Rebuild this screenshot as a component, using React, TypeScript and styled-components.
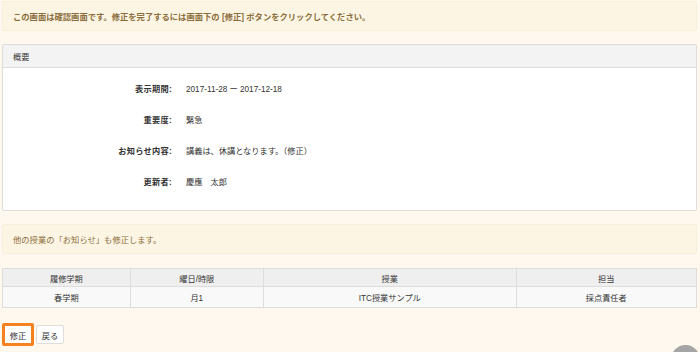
import styled, { createGlobalStyle } from 'styled-components';

const GlobalStyle = createGlobalStyle`
  html, body {
    margin: 0;
    padding: 0;
    background: #fff8ee;
  }
  body {
    font-family: 'Liberation Sans', 'Noto Sans CJK JP', sans-serif;
    font-size: 8.2px;
    color: #333;
  }
`;

const Page = styled.div`
  padding: 1px 3px 0 2px;
`;

const Alert = styled.div<{ strong?: boolean }>`
  height: 28px;
  display: flex;
  align-items: center;
  padding: 0 10px;
  background: #fcf5e3;
  border: 1px solid #f8eedb;
  border-radius: 2px;
  color: #8a6d3b;
  font-size: 8.3px;
  font-weight: ${(p) => (p.strong ? 'bold' : 'normal')};
  margin-top: ${(p) => (p.strong ? '0' : '13px')};
`;

const Panel = styled.section`
  margin-top: 13px;
  background: #fff;
  border: 1px solid #ddd;
  border-radius: 2px;
`;

const PanelHeading = styled.div`
  height: 22px;
  display: flex;
  align-items: center;
  padding: 0 10px;
  background: #f3f3f3;
  border-bottom: 1px solid #ddd;
`;

const PanelBody = styled.div`
  padding: 4px 0 14px;
`;

const FieldRow = styled.div`
  display: grid;
  grid-template-columns: 169px 1fr;
  column-gap: 14px;
  align-items: center;
  height: 31px;
`;

const Label = styled.div`
  text-align: right;
  font-weight: bold;
  letter-spacing: 0.3px;
`;

const Value = styled.div``;

const Table = styled.table`
  width: 100%;
  margin-top: 14px;
  border-collapse: collapse;
  table-layout: fixed;
  th, td {
    border: 1px solid #ddd;
    text-align: center;
    font-weight: normal;
    padding: 0;
  }
  th {
    height: 17px;
    background: #efefef;
  }
  td {
    height: 20px;
    background: #f9f9f9;
  }
`;

const ButtonRow = styled.div`
  display: flex;
  align-items: center;
  gap: 2px;
  margin-top: 15px;
`;

const Button = styled.button<{ primary?: boolean }>`
  font-family: inherit;
  font-size: 8.2px;
  color: #333;
  background: #fff;
  border-radius: 2px;
  cursor: pointer;
  padding: 0;
  border: ${(p) => (p.primary ? '3px solid #f5821f' : '1px solid #ddd')};
  width: ${(p) => (p.primary ? '32px' : '28px')};
  height: ${(p) => (p.primary ? '23px' : '19px')};
`;

const ToTop = styled.a`
  position: fixed;
  right: 0px;
  bottom: -22px;
  width: 29px;
  height: 29px;
  border-radius: 50%;
  background: #a5a5a5;
  display: flex;
  justify-content: center;
  padding-top: 6px;
  box-sizing: border-box;
`;

const fields = [
  { label: '表示期間:', value: '2017-11-28 ー 2017-12-18' },
  { label: '重要度:', value: '緊急' },
  { label: 'お知らせ内容:', value: '講義は、休講となります。（修正）' },
  { label: '更新者:', value: '慶應　太郎' },
];

const App = () => {
  return (
    <>
      <GlobalStyle />
      <Page>
        <Alert strong>
          この画面は確認画面です。修正を完了するには画面下の [修正] ボタンをクリックしてください。
        </Alert>
        <Panel>
          <PanelHeading>概要</PanelHeading>
          <PanelBody>
            {fields.map((f, i) => (
              <FieldRow key={i}>
                <Label>{f.label}</Label>
                <Value>{f.value}</Value>
              </FieldRow>
            ))}
          </PanelBody>
        </Panel>
        <Alert>他の授業の「お知らせ」も修正します。</Alert>
        <Table>
          <colgroup>
            <col style={{ width: '18.4%' }} />
            <col style={{ width: '19.2%' }} />
            <col style={{ width: '36.4%' }} />
            <col />
          </colgroup>
          <thead>
            <tr>
              <th>履修学期</th>
              <th>曜日/時限</th>
              <th>授業</th>
              <th>担当</th>
            </tr>
          </thead>
          <tbody>
            <tr>
              <td>春学期</td>
              <td>月1</td>
              <td>ITC授業サンプル</td>
              <td>採点責任者</td>
            </tr>
          </tbody>
        </Table>
        <ButtonRow>
          <Button primary>修正</Button>
          <Button>戻る</Button>
        </ButtonRow>
      </Page>
      <ToTop href="#">
        <svg width="14" height="10" viewBox="0 0 14 10">
          <path d="M2 8 L7 3 L12 8" fill="none" stroke="#fff" strokeWidth="2.6" />
        </svg>
      </ToTop>
    </>
  );
};

export default App;
